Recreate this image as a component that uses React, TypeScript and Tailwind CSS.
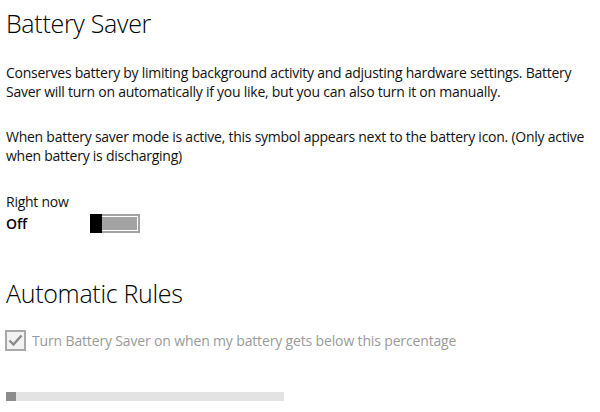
import React from 'react';

const body = "font-['Open_Sans','Noto_Sans',sans-serif]";

function Toggle() {
  return (
    <div className="flex h-[19px] w-[50px]">
      <div className="w-[12px] bg-black" />
      <div className="flex flex-1 border-y-2 border-r-2 border-[#a3a3a3]">
        <div className="flex-1 border-y border-r border-white bg-[#a3a3a3]" />
      </div>
    </div>
  );
}

function Checkbox() {
  return (
    <div className="-ml-px flex h-[21px] w-[21px] shrink-0 items-center justify-center border-2 border-[#a8a8a8] bg-[#f2f2f2]">
      <svg viewBox="0 0 17 17" className="h-[17px] w-[17px]">
        <polyline points="2.5,8.5 6.5,12.5 14.5,3.5" fill="none" stroke="#8a8a8a" strokeWidth="2.4" />
      </svg>
    </div>
  );
}

export default function App() {
  return (
    <div className={`h-[412px] w-[600px] overflow-hidden bg-white pl-[6px] pr-[6px] text-black ${body}`}>
      <h1 className="mt-[6px] text-[25px] leading-[34px] font-light tracking-[-0.3px]">Battery Saver</h1>

      <p className="mt-[23px] text-[14px] leading-[19px] tracking-[-0.25px] text-[#111]">
        Conserves battery by limiting background activity and adjusting hardware settings. Battery Saver will
        turn on automatically if you like, but you can also turn it on manually.
      </p>

      <p className="mt-[26px] text-[14px] leading-[19px] tracking-[-0.25px] text-[#111]">
        When battery saver mode is active, this symbol appears next to the battery icon. (Only active when
        battery is discharging)
      </p>

      <div className="mt-[27px] text-[14px] leading-[19px] tracking-[-0.25px] text-[#111]">Right now</div>
      <div className="mt-[3px] flex items-center">
        <span className="w-[84px] text-[14px] font-semibold leading-[19px]">Off</span>
        <Toggle />
      </div>

      <h2 className="mt-[43px] text-[25px] leading-[34px] font-light tracking-[-0.3px]">Automatic Rules</h2>

      <div className="mt-[20px] flex items-center gap-[6px]">
        <Checkbox />
        <span className="text-[14px] leading-[19px] tracking-[-0.15px] text-[#9a9a9a]">
          Turn Battery Saver on when my battery gets below this percentage
        </span>
      </div>

      <div className="mt-[41px] flex h-[9px] w-[278px] bg-[#e3e3e3]">
        <div className="w-[10px] bg-[#8c8c8c]" />
      </div>
    </div>
  );
}
